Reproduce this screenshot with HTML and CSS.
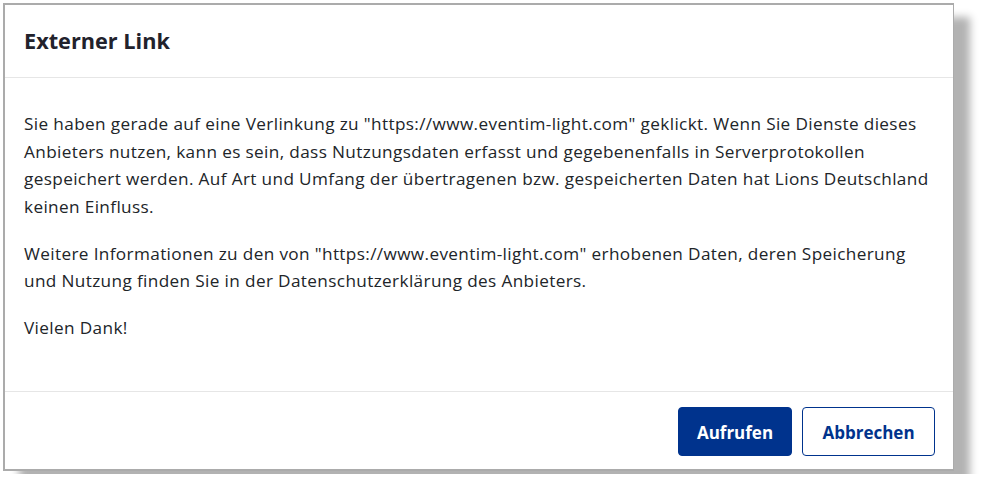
FILE: index.html
```html
<!DOCTYPE html>
<html lang="de">
<head>
<meta charset="utf-8">
<title>Externer Link</title>
<link rel="stylesheet" href="styles.css">
</head>
<body>
<div class="dialog">
  <div class="dialog-header">
    <h2 class="dialog-title">Externer Link</h2>
  </div>
  <div class="dialog-body">
    <p>Sie haben gerade auf eine Verlinkung zu "https://www.eventim-light.com" geklickt. Wenn Sie Dienste dieses Anbieters nutzen, kann es sein, dass Nutzungsdaten erfasst und gegebenenfalls in Serverprotokollen gespeichert werden. Auf Art und Umfang der übertragenen bzw. gespeicherten Daten hat Lions Deutschland keinen Einfluss.</p>
    <p>Weitere Informationen zu den von "https://www.eventim-light.com" erhobenen Daten, deren Speicherung und Nutzung finden Sie in der Datenschutzerklärung des Anbieters.</p>
    <p>Vielen Dank!</p>
  </div>
  <div class="dialog-footer">
    <button class="btn btn-primary">Aufrufen</button>
    <button class="btn btn-outline">Abbrechen</button>
  </div>
</div>
</body>
</html>
```
FILE: styles.css
```css
html, body {
  margin: 0;
  padding: 0;
  background: #ffffff;
}
body {
  padding: 3px;
  font-family: "Open Sans", "Noto Sans", sans-serif;
  color: #212529;
}
.dialog {
  width: 951px;
  height: 468px;
  box-sizing: border-box;
  border: 2px solid #ababab;
  border-right-width: 1px;
  border-bottom-width: 2px;
  background: #fff;
  box-shadow: 16px 14px 8px rgba(0, 0, 0, 0.3);
  display: flex;
  flex-direction: column;
}
.dialog-header {
  height: 73px;
  box-sizing: border-box;
  border-bottom: 1px solid #e6e6e6;
  padding: 0 19px;
  display: flex;
  align-items: center;
}
.dialog-title {
  margin: 0;
  font-size: 21.7px;
  font-weight: 700;
  color: #22222c;
  position: relative;
  top: -1px;
}
.dialog-body {
  flex: 1;
  padding: 32px 19px 0;
  font-size: 17.2px;
  letter-spacing: 0.36px;
  line-height: 27.7px;
}
.dialog-body p {
  margin: 0 0 18.8px;
}
.dialog-footer {
  border-top: 1px solid #e6e6e6;
  padding: 15px 18px 13px;
  display: flex;
  justify-content: flex-end;
  gap: 10px;
}
.btn {
  height: 49px;
  box-sizing: border-box;
  font-family: inherit;
  font-size: 17px;
  font-weight: 700;
  border-radius: 4px;
  padding: 2px 0 0;
  cursor: pointer;
}
.btn-primary {
  background: #00338d;
  color: #fff;
  border: 1px solid #00338d;
  width: 114px;
}
.btn-outline {
  background: #fff;
  color: #00338d;
  border: 1px solid #00338d;
  width: 133px;
}
```
